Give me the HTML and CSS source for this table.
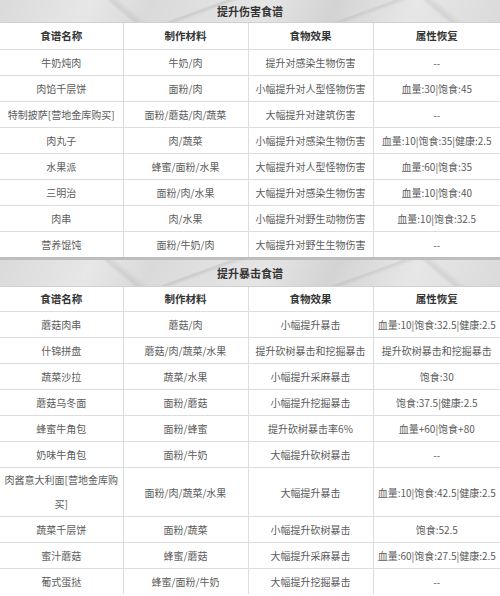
FILE: index.html
```html
<!DOCTYPE html>
<html lang="zh">
<head>
<meta charset="utf-8">
<link rel="stylesheet" href="styles.css">
</head>
<body>
<div class="page">
  <div class="band band-first"><span class="band-title">提升伤害食谱</span></div>
  <table class="recipes">
    <colgroup><col class="c1"><col class="c2"><col class="c3"><col class="c4"></colgroup>
    <thead>
      <tr class="head-first"><th>食谱名称</th><th>制作材料</th><th>食物效果</th><th>属性恢复</th></tr>
    </thead>
    <tbody>
      <tr><td>牛奶炖肉</td><td>牛奶/肉</td><td>提升对感染生物伤害</td><td>--</td></tr>
      <tr><td>肉馅千层饼</td><td>面粉/肉</td><td>小幅提升对人型怪物伤害</td><td>血量:30|饱食:45</td></tr>
      <tr><td>特制披萨[营地金库购买]</td><td>面粉/蘑菇/肉/蔬菜</td><td>大幅提升对建筑伤害</td><td>--</td></tr>
      <tr><td>肉丸子</td><td>肉/蔬菜</td><td>小幅提升对感染生物伤害</td><td>血量:10|饱食:35|健康:2.5</td></tr>
      <tr><td>水果派</td><td>蜂蜜/面粉/水果</td><td>大幅提升对人型怪物伤害</td><td>血量:60|饱食:35</td></tr>
      <tr><td>三明治</td><td>面粉/肉/水果</td><td>大幅提升对感染生物伤害</td><td>血量:10|饱食:40</td></tr>
      <tr><td>肉串</td><td>肉/水果</td><td>小幅提升对野生动物伤害</td><td>血量:10|饱食:32.5</td></tr>
      <tr><td>营养馄饨</td><td>面粉/牛奶/肉</td><td>大幅提升对野生生物伤害</td><td>--</td></tr>
    </tbody>
  </table>
  <div class="band band-second"><span class="band-title">提升暴击食谱</span></div>
  <table class="recipes">
    <colgroup><col class="c1"><col class="c2"><col class="c3"><col class="c4"></colgroup>
    <thead>
      <tr class="head-second"><th>食谱名称</th><th>制作材料</th><th>食物效果</th><th>属性恢复</th></tr>
    </thead>
    <tbody>
      <tr><td>蘑菇肉串</td><td>蘑菇/肉</td><td>小幅提升暴击</td><td>血量:10|饱食:32.5|健康:2.5</td></tr>
      <tr><td>什锦拼盘</td><td>蘑菇/肉/蔬菜/水果</td><td>提升砍树暴击和挖掘暴击</td><td>提升砍树暴击和挖掘暴击</td></tr>
      <tr><td>蔬菜沙拉</td><td>蔬菜/水果</td><td>小幅提升采麻暴击</td><td>饱食:30</td></tr>
      <tr><td>蘑菇乌冬面</td><td>面粉/蘑菇</td><td>小幅提升挖掘暴击</td><td>饱食:37.5|健康:2.5</td></tr>
      <tr><td>蜂蜜牛角包</td><td>面粉/蜂蜜</td><td>提升砍树暴击率6%</td><td>血量+60|饱食+80</td></tr>
      <tr><td>奶味牛角包</td><td>面粉/牛奶</td><td>大幅提升砍树暴击</td><td>--</td></tr>
      <tr><td class="wrap">肉酱意大利面[营地金库购买]</td><td>面粉/肉/蔬菜/水果</td><td>大幅提升暴击</td><td>血量:10|饱食:42.5|健康:2.5</td></tr>
      <tr><td>蔬菜千层饼</td><td>面粉/蔬菜</td><td>小幅提升砍树暴击</td><td>饱食:52.5</td></tr>
      <tr><td>蜜汁蘑菇</td><td>蜂蜜/蘑菇</td><td>大幅提升采麻暴击</td><td>血量:60|饱食:27.5|健康:2.5</td></tr>
      <tr><td>葡式蛋挞</td><td>蜂蜜/面粉/牛奶</td><td>大幅提升挖掘暴击</td><td>--</td></tr>
    </tbody>
  </table>
</div>
</body>
</html>
```
FILE: styles.css
```css
html, body {
  margin: 0;
  padding: 0;
  background: #ffffff;
}
.page {
  width: 500px;
  font-family: "Noto Sans CJK SC", "Noto Sans", sans-serif;
  font-size: 10px;
  color: #5c5c5c;
}
.band {
  display: flex;
  justify-content: center;
  align-items: center;
  background:
    linear-gradient(160deg, rgba(0,0,0,0) 0%, rgba(0,0,0,0) 40%, rgba(120,120,120,0.18) 41%, rgba(0,0,0,0) 43%, rgba(0,0,0,0) 70%, rgba(120,120,120,0.15) 71%, rgba(0,0,0,0) 73%),
    linear-gradient(40deg, rgba(0,0,0,0) 0%, rgba(0,0,0,0) 25%, rgba(120,120,120,0.15) 26%, rgba(0,0,0,0) 28%, rgba(0,0,0,0) 85%, rgba(120,120,120,0.15) 86%, rgba(0,0,0,0) 88%),
    linear-gradient(115deg, rgba(255,255,255,0) 0%, rgba(255,255,255,0.35) 18%, rgba(0,0,0,0) 30%, rgba(255,255,255,0.3) 52%, rgba(0,0,0,0.03) 66%, rgba(255,255,255,0.35) 82%, rgba(0,0,0,0) 100%),
    #dadada;
  border-bottom: 1px solid #d0d0d0;
}
.band-first {
  height: 22px;
}
.band-second {
  height: 26px;
  border-top: 3px solid #bdbdbd;
}
.band-title {
  font-weight: bold;
  font-size: 11px;
  color: #333333;
}
.recipes {
  width: 500px;
  border-collapse: collapse;
  border-style: hidden;
  table-layout: fixed;
}
.c1 { width: 123px; }
.c2 { width: 125px; }
.c3 { width: 125px; }
.c4 { width: 127px; }
.recipes th, .recipes td {
  border: 1px solid #dddddd;
  padding: 0;
  text-align: center;
  white-space: nowrap;
  line-height: 25px;
  height: 25px;
  vertical-align: middle;
}
.recipes th {
  font-weight: bold;
  color: #333333;
  font-size: 10.5px;
}
.head-first th {
  height: 26px;
  line-height: 26px;
}
.head-second th {
  height: 24px;
  line-height: 24px;
}
.recipes td.wrap {
  white-space: normal;
  line-height: 24px;
  padding: 0 3px;
}
```
